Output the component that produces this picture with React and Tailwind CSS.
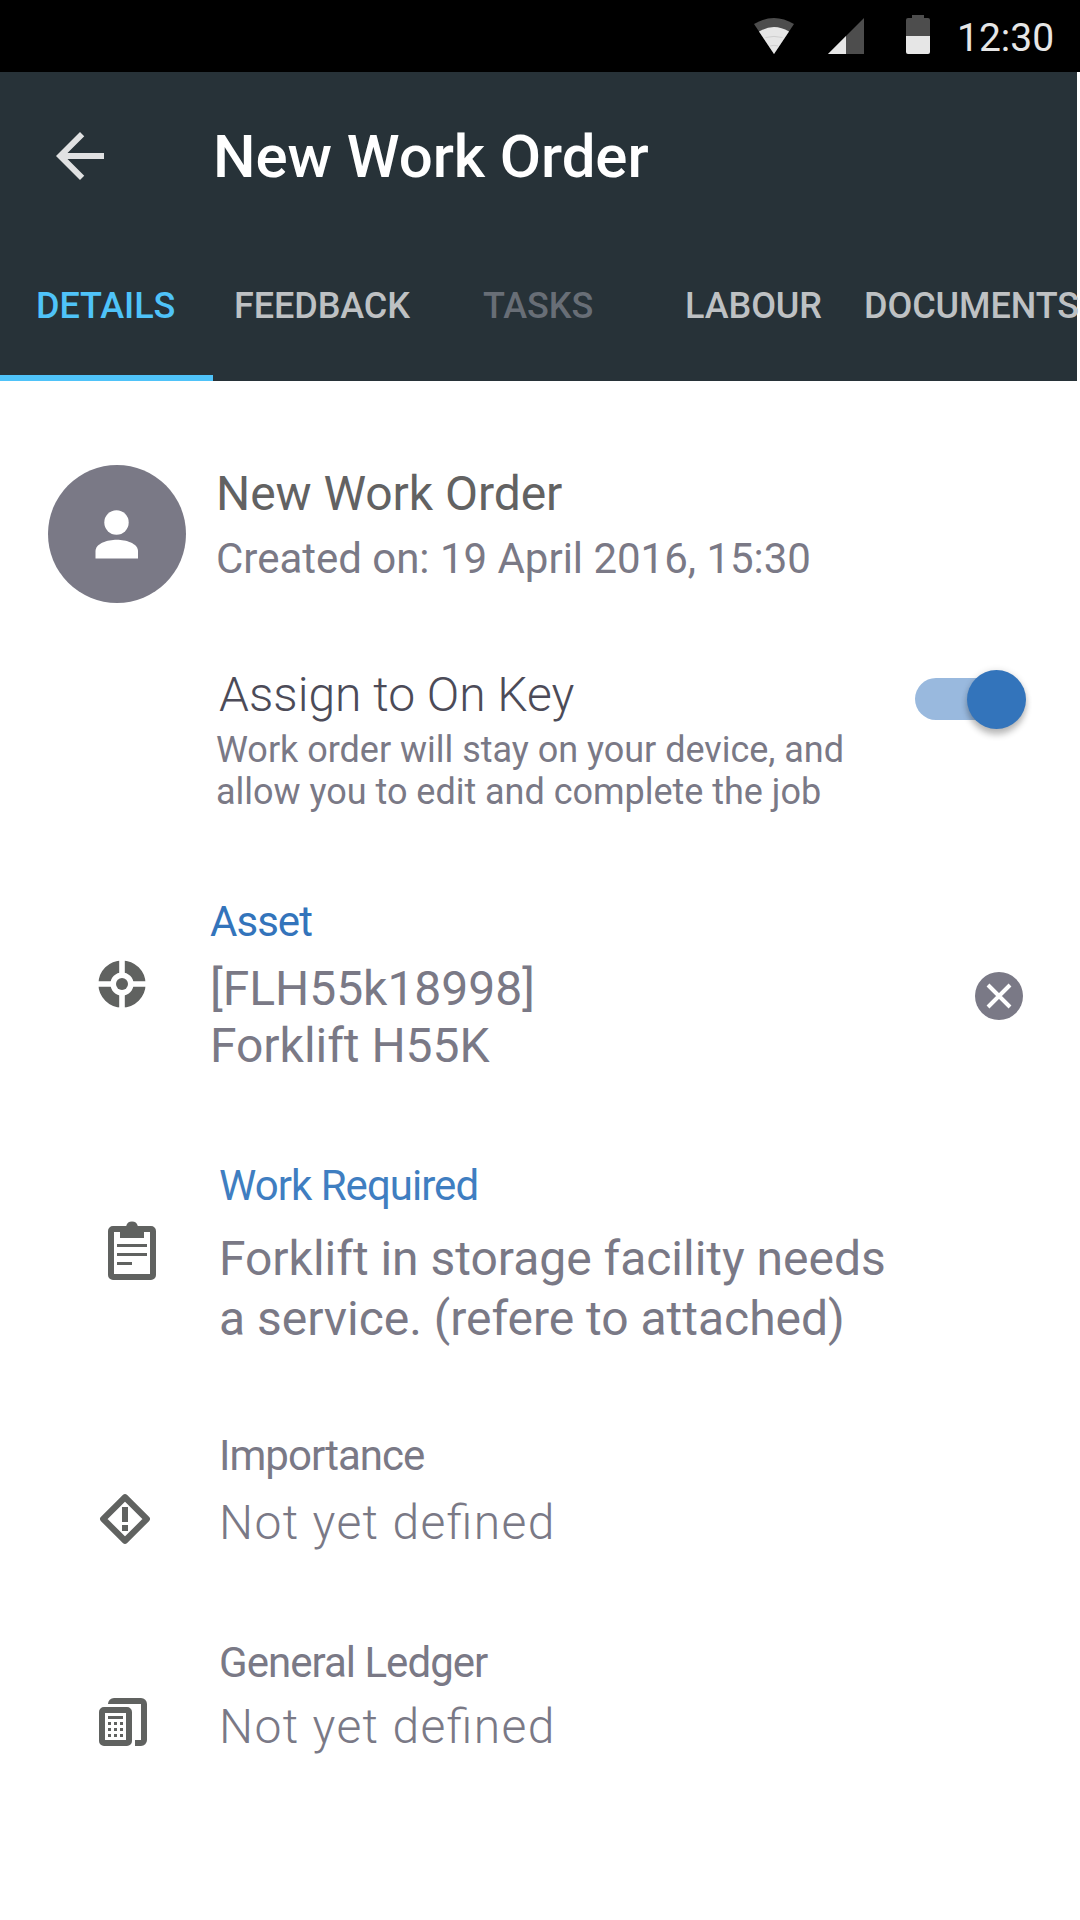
function StatusBar() {
  return (
    <div className="flex h-[72px] items-start bg-black pl-[753px] text-[#e6e6e6]">
      <svg className="mt-[15px] h-[42px] w-[183px] shrink-0" viewBox="0 0 183 42">
        <path d="M1 9 Q21 -3 41 9 L21 39Z" fill="#4d4d4d" />
        <path d="M6 16.5 Q21 7.5 36 16.5 L21 39Z" fill="#e6e6e6" />
        <path d="M12.5 22.5 Q21 20.3 29.5 22.5M17 31 Q21 29.6 25 31" fill="none" stroke="#c4c4c4" strokeWidth="0.7" />
        <path d="M111 3v36H75z" fill="#4d4d4d" />
        <path d="M93 21v18H75z" fill="#e6e6e6" />
        <path d="M159 0h12v3h4a2 2 0 0 1 2 2v16h-24V5a2 2 0 0 1 2-2h4z" fill="#4d4d4d" />
        <path d="M153 21h24v16a2 2 0 0 1-2 2h-20a2 2 0 0 1-2-2z" fill="#e6e6e6" />
      </svg>
      <span className="ml-[21px] mt-[14px] whitespace-nowrap text-[39px] leading-[48px]">12:30</span>
    </div>
  );
}

const tabs = [
  { label: "DETAILS", className: "pl-[36px] text-[#4fc3f9]" },
  { label: "FEEDBACK", className: "pl-[18px] text-[#bec1c3]" },
  { label: "TASKS", className: "pl-[51px] text-[#686e76]" },
  { label: "LABOUR", className: "pl-[37px] text-[#bec1c3]" },
  { label: "DOCUMENTS", className: "pl-0 text-[#bec1c3]" },
];

function Header() {
  return (
    <header className="flex h-[309px] w-[1077px] flex-col bg-[#273238]">
      <div className="flex h-[168px] items-center">
        <svg className="ml-[44px] size-[72px] shrink-0" viewBox="0 0 24 24" fill="#e0e1e2">
          <path d="M20 11H7.83l5.59-5.59L12 4l-8 8 8 8 1.41-1.41L7.83 13H20v-2z" />
        </svg>
        <h1 className="ml-[97px] mt-[2px] whitespace-nowrap text-[60px] font-medium leading-[72px] tracking-[-0.08px] text-white">New Work Order</h1>
      </div>
      <nav className="flex pt-[43px]">
        {tabs.map((t) => (
          <div key={t.label} className={`w-[216px] shrink-0 whitespace-nowrap text-[36px] font-medium leading-[46px] tracking-[-0.08px] ${t.className}`}>
            {t.label}
          </div>
        ))}
      </nav>
      <div className="mt-auto h-[6px] w-[213px] bg-[#4fc3f9]" />
    </header>
  );
}

function AssetIcon() {
  return (
    <svg className="size-[48px]" viewBox="0 0 48 48">
      <circle cx="24" cy="24" r="17.6" fill="none" stroke="#606260" strokeWidth="12" />
      <path d="M24 0v48M0 24h48" stroke="#fff" strokeWidth="5.6" />
      <circle cx="24" cy="24" r="8" fill="#fff" />
      <circle cx="24" cy="24" r="6" fill="#606260" />
    </svg>
  );
}

function ClipboardIcon() {
  return (
    <svg className="h-[60px] w-[48px]" viewBox="0 0 48 60">
      <rect x="3" y="9" width="42" height="48" rx="2" fill="none" stroke="#606260" strokeWidth="6" />
      <path d="M12 6h6.2a6 6 0 0 1 11.6 0H36v12H12z" fill="#606260" />
      <path d="M9 25.5h30M9 34.5h30M9 43.5h15" stroke="#606260" strokeWidth="3" />
    </svg>
  );
}

function ImportanceIcon() {
  return (
    <svg className="size-[52px]" viewBox="0 0 52 52">
      <path d="M26 4.2 47.8 26 26 47.8 4.2 26z" fill="none" stroke="#606260" strokeWidth="6.2" strokeLinejoin="round" />
      <path d="M26 14v15M26 32v6" stroke="#606260" strokeWidth="6" />
    </svg>
  );
}

function LedgerIcon() {
  return (
    <svg className="size-[48px]" viewBox="0 0 48 48">
      <rect x="3" y="12" width="27" height="33" rx="2" fill="none" stroke="#606260" strokeWidth="6" />
      <path d="M9 6a6 6 0 0 1 6-6h27a6 6 0 0 1 6 6v36a6 6 0 0 1-6 6h-6v-6h6V6z" fill="#606260" />
      <path d="M9 19.5h15" stroke="#606260" strokeWidth="3" />
      <path d="M9 25.5h15M9 31.5h15M9 37.5h15" stroke="#606260" strokeWidth="3" strokeDasharray="3 3" />
    </svg>
  );
}

function Field({ icon, label, children, className, iconClass, bodyClass, labelClass = "" }) {
  return (
    <section className={`flex ${className}`}>
      <div className={`shrink-0 ${iconClass}`}>{icon}</div>
      <div className={`shrink-0 whitespace-nowrap ${bodyClass}`}>
        <h3 className={`text-[42px] leading-[50px] tracking-[-0.97px] ${labelClass}`}>{label}</h3>
        {children}
      </div>
    </section>
  );
}

export default function App() {
  return (
    <div className="h-[1920px] w-[1080px] overflow-hidden bg-white font-['Roboto',sans-serif] text-[#7a7986]">
      <StatusBar />
      <Header />
      <main>
        <section className="mt-[84px] flex h-[138px] pl-[48px]">
          <div className="size-[138px] shrink-0 rounded-full bg-[#7a7986]">
            <svg className="size-[138px]" viewBox="0 0 138 138" fill="#fff">
              <circle cx="68.5" cy="57.5" r="12.2" />
              <path d="M47.5 93.500V86c0-7.500 12-11.300 21.300-11.300S90 78.500 90 86v7.500z" />
            </svg>
          </div>
          <div className="ml-[30px] whitespace-nowrap">
            <h2 className="mt-px text-[48px] leading-[56px] tracking-[-0.05px] text-[#626262]">New Work Order</h2>
            <p className="mt-[12px] text-[42px] leading-[50px] tracking-[-0.02px]">Created on: 19 April 2016, 15:30</p>
          </div>
        </section>

        <section className="mt-[64px] flex pl-[216px]">
          <div className="w-[699px] whitespace-nowrap">
            <h2 className="ml-[3px] text-[48px] font-light leading-[56px] text-[#4c4b58]">Assign to On Key</h2>
            <p className="mt-[6px] text-[36px] leading-[42px] tracking-[-0.02px]">
              Work order will stay on your device, and
              <br />
              allow you to edit and complete the job
            </p>
          </div>
          <div className="mt-[11px] flex h-[42px] w-[108px] items-center justify-end rounded-full bg-[#99b9de]">
            <div className="-mr-[3px] size-[59px] shrink-0 rounded-full bg-[#3374bb] shadow-[0_6px_6px_rgba(0,0,0,0.24),0_0_6px_rgba(0,0,0,0.12)]" />
          </div>
        </section>

        <Field
          className="mt-[84px]"
          icon={<AssetIcon />}
          iconClass="ml-[98px] pt-[62.5px]"
          bodyClass="ml-[64px] w-[765px]"
          label="Asset"
          labelClass="text-[#3374bb]"
        >
          <div className="mt-[13px] flex">
            <p className="w-[765px] shrink-0 text-[48px] leading-[57px] tracking-[-0.03px]">
              [FLH55k18998]
              <br />
              Forklift H55K
            </p>
            <svg className="mt-[12px] size-[48px] shrink-0" viewBox="0 0 48 48">
              <circle cx="24" cy="24" r="24" fill="#7a7986" />
              <path d="M13 13l22 22M35 13L13 35" stroke="#fff" strokeWidth="4" />
            </svg>
          </div>
        </Field>

        <Field
          className="mt-[87px]"
          icon={<ClipboardIcon />}
          iconClass="ml-[108px] pt-[59px]"
          bodyClass="ml-[63px]"
          label="Work Required"
          labelClass="text-[#3f7ec1]"
        >
          <p className="mt-[18px] text-[48px] leading-[60px] tracking-[-0.02px]">
            Forklift in storage facility needs
            <br />a service. (refere to attached)
          </p>
        </Field>

        <Field
          className="mt-[82px]"
          icon={<ImportanceIcon />}
          iconClass="ml-[98.5px] pt-[62px]"
          bodyClass="ml-[68.5px]"
          label="Importance"
        >
          <p className="mt-[14px] text-[48px] font-light leading-[56px] tracking-[1.35px] [font-feature-settings:'liga'_1]">Not yet defined</p>
        </Field>

        <Field
          className="mt-[87px]"
          icon={<LedgerIcon />}
          iconClass="ml-[99px] pt-[60px]"
          bodyClass="ml-[72px]"
          label="General Ledger"
        >
          <p className="mt-[11px] text-[48px] font-light leading-[56px] tracking-[1.35px] [font-feature-settings:'liga'_1]">Not yet defined</p>
        </Field>
      </main>
    </div>
  );
}
